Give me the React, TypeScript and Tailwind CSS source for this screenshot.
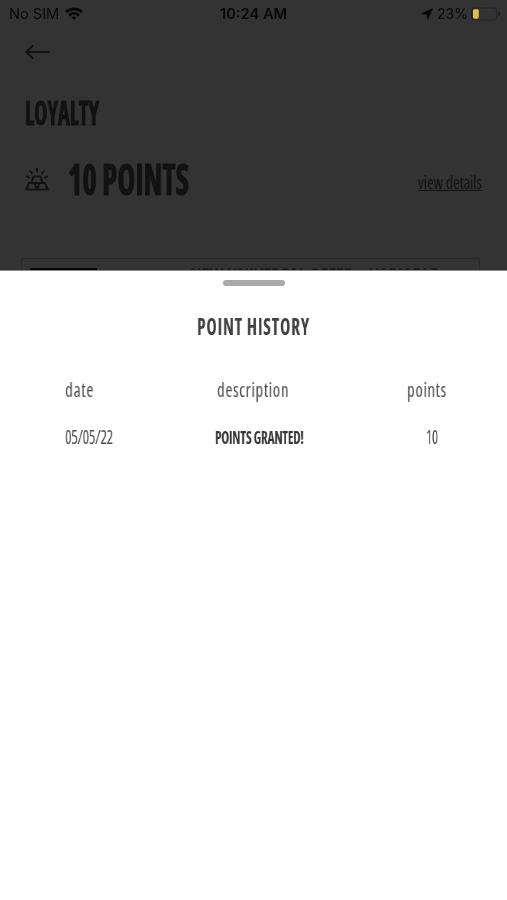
import { useLayoutEffect, useRef, useState } from "react";

type FitProps = { text: string; box: string; className?: string };

// Condenses a line of text horizontally until it fills its box.
function Fit({ text, box, className = "" }: FitProps) {
  const ref = useRef<HTMLSpanElement>(null);
  const outer = useRef<HTMLSpanElement>(null);
  const [scale, setScale] = useState(1);
  useLayoutEffect(() => {
    if (ref.current && outer.current) {
      setScale(outer.current.clientWidth / ref.current.offsetWidth);
    }
  }, [text]);
  return (
    <span ref={outer} className={`flex shrink-0 items-center ${box}`}>
      <span
        ref={ref}
        className={`inline-block shrink-0 origin-left whitespace-nowrap will-change-transform ${className}`}
        style={{ transform: `scaleX(${scale})` }}
      >
        {text}
      </span>
    </span>
  );
}

function Wifi() {
  return (
    <svg viewBox="0 0 18 14" className="ml-[6px] h-[14px] w-[18px]" fill="none" stroke="#080808" strokeWidth="2.7">
      <path d="M1 5.1C5.6.8 12.4.8 17 5.1" />
      <path d="M4.1 8.4C7 5.8 11 5.8 13.9 8.4" />
      <path d="M6.4 10.3C7.9 9.1 10.1 9.1 11.6 10.3L9 13.2Z" fill="#080808" stroke="none" />
    </svg>
  );
}

function GoldBars() {
  return (
    <svg viewBox="0 0 24 24" className="h-6 w-6" fill="none" stroke="#121212" strokeWidth="1.9" strokeLinejoin="round" strokeLinecap="round">
      <path d="M1.2 22.6 3.9 16H9.4L12 22.6ZM12 22.6 14.6 16H20.1L22.8 22.6ZM6.4 15.8 8.6 9.4H15.4L17.6 15.8M9.4 16H14.6" />
      <path d="M12 1.8V4.2M5.4 4.2 6.9 6.2M18.6 4.2 17.1 6.2M1.7 9.4 4.2 10.6M22.3 9.4 19.8 10.6" />
    </svg>
  );
}

export default function App() {
  return (
    <div className="flex h-[900px] w-[507px] flex-col overflow-hidden bg-[#333333] font-['Open_Sans','Noto_Sans',sans-serif] text-[#121212]">
      <div className="flex h-[270px] shrink-0 flex-col overflow-hidden">
        <header className="grid h-[27px] shrink-0 grid-cols-[220px_67px_1fr] items-center pr-[6px] font-['Inter',sans-serif] text-[14px] leading-none text-[#080808]">
          <div className="flex items-center pl-[9px]">
            <Fit text="No SIM" box="w-[50px] h-[27px]" />
            <Wifi />
          </div>
          <Fit text="10:24 AM" box="w-[67px] h-[27px]" className="font-semibold" />
          <div className="flex items-center justify-end">
            <svg viewBox="0 0 12 12" className="mr-[4px] h-[12px] w-[12px]" fill="#080808" stroke="#080808" strokeWidth=".8" strokeLinejoin="round">
              <path d="M11.4.8 6.6 11.2 6.2 6.1.7 5.8Z" />
            </svg>
            <Fit text="23%" box="w-[31px] h-[27px]" />
            <svg viewBox="0 0 30 14" className="ml-[3px] h-[14px] w-[30px]">
              <rect x=".8" y="1" width="25" height="12" rx="3" fill="none" stroke="#242424" strokeWidth="1.2" />
              <path d="M27 4.5Q29.5 5.5 29.5 7T27 9.5Z" fill="#202020" />
              <rect x="2" y="2.3" width="5.8" height="9.4" rx="1.6" fill="#e3bd45" />
            </svg>
          </div>
        </header>
        <div className="flex h-[65px] shrink-0 items-start pl-[25px] pt-[17px]">
          <svg viewBox="0 0 26 16" className="h-[16px] w-[26px]" fill="none" stroke="#121212" strokeWidth="2" strokeLinecap="round" strokeLinejoin="round">
            <path d="M24 8H1.2M7.5 2 1.2 8 7.5 14" />
          </svg>
        </div>
        <h1 className="flex h-10 shrink-0 pl-[25px]">
          <Fit text="LOYALTY" box="w-[74px] h-10" className="mt-px text-[33px] font-bold leading-[40px] font-stretch-condensed [-webkit-text-stroke:0.8px_#121212]" />
        </h1>
        <div className="flex h-[93px] shrink-0 items-center pl-[25px] pr-[25px]">
          <GoldBars />
          <Fit text="10 POINTS" box="ml-[19px] w-[121px] h-[50px]" className="mt-px text-[43px] font-bold leading-[50px] font-stretch-condensed [-webkit-text-stroke:1px_#121212]" />
          <button className="ml-auto mt-[7px] flex">
            <Fit text="view details" box="w-[64px] h-6" className="text-[18px] leading-6 underline font-stretch-condensed decoration-1 underline-offset-1" />
          </button>
        </div>
        <div className="mx-[21px] mr-[27px] mt-[33px] flex h-[60px] shrink-0 items-start overflow-hidden rounded-[2px] border border-[#292929] pl-[8px] pt-[9px]">
          <div className="h-10 w-[67px] bg-[#050505]" />
          <Fit text="NEW UNIVERSAL OFFER – VARIABLE" box="ml-[93px] -mt-[4px] w-[248px] h-5" className="text-[18px] font-bold leading-5 text-[#1c1c1c] font-stretch-condensed" />
        </div>
      </div>
      <section className="flex flex-1 flex-col items-center border-t border-[#8b8b8b] bg-white text-[#4a4a4a]">
        <div className="mt-[9px] h-[6px] w-[62px] shrink-0 rounded-full bg-[#a9a9a9]" />
        <h2 className="mt-[24px] flex text-[#414141]">
          <Fit text="POINT HISTORY" box="w-[113px] h-8" className="text-[23px] font-bold leading-8 tracking-[1px] font-stretch-condensed" />
        </h2>
        <div className="mt-[32px] grid w-full grid-cols-[152px_190px_1fr] pl-[65px] leading-8">
          <Fit text="date" box="w-[29px] h-8" className="text-[19px] tracking-[0.7px] font-stretch-condensed" />
          <Fit text="description" box="w-[72px] h-8" className="text-[19px] tracking-[0.7px] font-stretch-condensed" />
          <Fit text="points" box="w-[40px] h-8" className="text-[19px] tracking-[0.7px] font-stretch-condensed" />
        </div>
        <div className="mt-[15px] grid w-full grid-cols-[150px_211px_1fr] pl-[65px] leading-8">
          <Fit text="05/05/22" box="w-[48px] h-8" className="text-[20px] tracking-[-0.5px] font-stretch-condensed" />
          <Fit text="POINTS GRANTED!" box="w-[89px] h-8" className="text-[18.5px] font-bold tracking-[-0.3px] text-[#363636] font-stretch-condensed" />
          <Fit text="10" box="w-[12px] h-8" className="text-[20px] font-stretch-condensed" />
        </div>
      </section>
    </div>
  );
}
